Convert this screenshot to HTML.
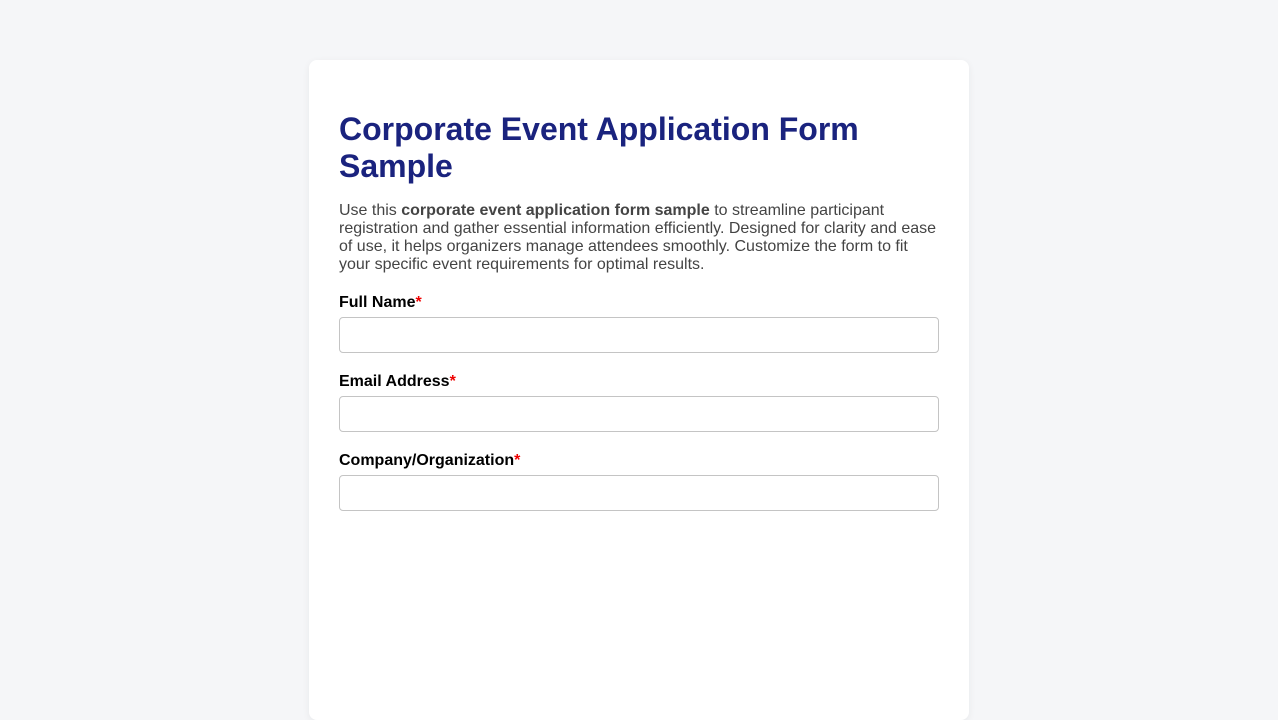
<!DOCTYPE html>
<html><head><style>
body{margin:0;background:#f5f6f8;font-family:"Liberation Sans",Arial,sans-serif;}
.card{position:absolute;left:309px;top:60px;width:600px;padding:30px;background:#fff;border-radius:8px;box-shadow:0 2px 8px rgba(0,0,0,0.06);height:600px;}
h1{color:#1a237e;font-size:32px;line-height:37px;margin:21px 0 17px;font-weight:bold;}
p{color:#444;font-size:16px;line-height:18px;margin:0 0 20px;}
label{display:block;font-weight:bold;font-size:16px;line-height:18px;color:#000;margin-bottom:5px;}
label span{color:#e00;}
.in{height:34px;border:1px solid #c4c4c4;border-radius:4px;margin-bottom:20px;}
</style></head><body>
<div class="card">
<h1>Corporate Event Application Form Sample</h1>
<p>Use this <b>corporate event application form sample</b> to streamline participant registration and gather essential information efficiently. Designed for clarity and ease of use, it helps organizers manage attendees smoothly. Customize the form to fit your specific event requirements for optimal results.</p>
<label>Full Name<span>*</span></label><div class="in"></div>
<label>Email Address<span>*</span></label><div class="in"></div>
<label>Company/Organization<span>*</span></label><div class="in"></div>
</div>
</body></html>
